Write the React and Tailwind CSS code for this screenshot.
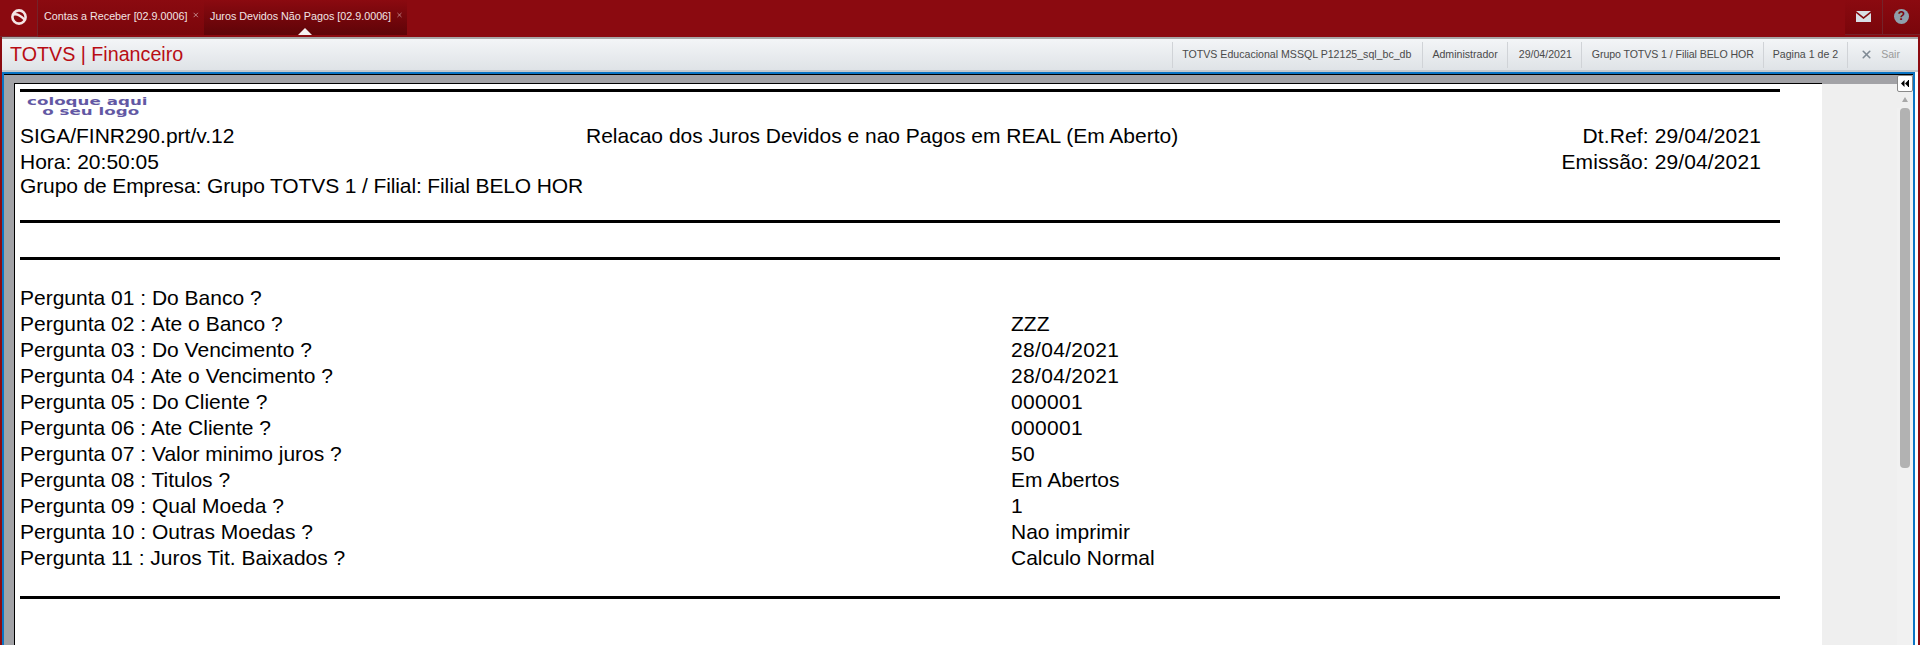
import React from 'react'
import { X } from 'lucide-react'

const tabs = [
    { label: 'Contas a Receber [02.9.0006]', active: false },
    { label: 'Juros Devidos Não Pagos [02.9.0006]', active: true },
]

const infos = [
    { label: 'TOTVS Educacional MSSQL P12125_sql_bc_db', className: 'pl-[9px] pr-[11px]' },
    { label: 'Administrador', className: 'px-[9px]' },
    { label: '29/04/2021', className: 'pl-[11px] pr-[9px]' },
    { label: 'Grupo TOTVS 1 / Filial BELO HOR', className: 'pl-[10px] pr-[9px] tracking-[-0.08px]' },
    { label: 'Pagina 1 de 2', className: 'px-[9px]' },
]

const perguntas = [
    ['Pergunta 01 : Do Banco ?', ''],
    ['Pergunta 02 : Ate o Banco ?', 'ZZZ'],
    ['Pergunta 03 : Do Vencimento ?', '28/04/2021'],
    ['Pergunta 04 : Ate o Vencimento ?', '28/04/2021'],
    ['Pergunta 05 : Do Cliente ?', '000001'],
    ['Pergunta 06 : Ate Cliente ?', '000001'],
    ['Pergunta 07 : Valor minimo juros ?', '50'],
    ['Pergunta 08 : Titulos ?', 'Em Abertos'],
    ['Pergunta 09 : Qual Moeda ?', '1'],
    ['Pergunta 10 : Outras Moedas ?', 'Nao imprimir'],
    ['Pergunta 11 : Juros Tit. Baixados ?', 'Calculo Normal'],
]

const Rule = ({ className }) => <div className={`h-[3px] w-[1760px] bg-black ${className}`} />

const TotvsLogo = () => (
    <svg width="18" height="18" viewBox="0 0 18 18" fill="none">
        <circle cx="9" cy="9" r="6.6" stroke="#f4e6e6" strokeWidth="2.6" />
        <path d="M3.5 6.5 C7 5.5 11 8 14.5 11.5" stroke="#f4e6e6" strokeWidth="2.4" />
    </svg>
)

const EnvelopeIcon = () => (
    <svg width="15" height="11" viewBox="0 0 15 11">
        <path d="M0 0 H15 L7.5 6 Z" fill="#d8dfe6" />
        <path d="M0 2 L7.5 8 L15 2 V11 H0 Z" fill="#d8dfe6" />
    </svg>
)

const CollapseIcon = () => (
    <svg width="8" height="7" viewBox="0 0 8 7">
        <path d="M0 3.5 L3.5 0 V7 Z" fill="#000" />
        <path d="M4 3.5 L7 0.5 V6.5 Z" fill="#000" />
        <rect x="7" y="0" width="1" height="7" fill="#000" />
    </svg>
)

export default function App() {
    return (
        <div className="flex h-[645px] w-[1920px] flex-col overflow-hidden bg-[#8b0a10] font-['Liberation_Sans',Arial,sans-serif]">
            {/* Top bar */}
            <header className="flex h-[37px] shrink-0 items-stretch">
                <div className="flex w-[38px] items-center justify-center border-r border-b border-[#75232a] bg-[#8b0a10] pb-[2px]">
                    <TotvsLogo />
                </div>
                <div className="flex h-[35px] items-stretch">
                    {tabs.map((tab) => (
                        <div
                            key={tab.label}
                            className={`relative flex items-center pl-[6px] pr-[4px] text-[10.75px] text-[#f3e4e4] ${tab.active ? 'w-[203px] bg-gradient-to-b from-[#8b0a10] to-[#5f0408]' : 'w-[166px] bg-gradient-to-b from-[#8b0a10] to-[#7a060b]'}`}
                        >
                            <span className="pb-[3px] whitespace-nowrap">{tab.label}</span>
                            <X size={8} strokeWidth={2.5} className="mb-[5px] ml-[5px] text-[#cfa4a6]" />
                            {tab.active && (
                                <div className="absolute bottom-0 left-[94px] h-0 w-0 border-x-[7px] border-b-[7px] border-x-transparent border-b-[#f5f0f0]" />
                            )}
                        </div>
                    ))}
                </div>
                <div className="ml-auto flex h-[35px] items-stretch">
                    <div className="flex w-[38px] items-center justify-center border-r border-b border-[#75232a] bg-gradient-to-b from-[#8b0a10] to-[#7a060b] pb-[2px]">
                        <EnvelopeIcon />
                    </div>
                    <div className="flex w-[37px] items-center justify-center border-b border-[#75232a] bg-gradient-to-b from-[#8b0a10] to-[#7a060b] pb-[2px]">
                        <div className="flex h-[15px] w-[15px] items-center justify-center rounded-full bg-[#8fa0ac] text-[12px] font-bold text-[#7a060b]">?</div>
                    </div>
                </div>
            </header>

            <div className="mx-[2px] flex min-h-0 flex-1 flex-col bg-white">
                {/* Sub header */}
                <div className="flex h-[35px] shrink-0 items-center border-t-[2px] border-b-[2px] border-t-[#a9a9a9] border-b-[#c4c8cc] bg-gradient-to-b from-[#f3f5f7] to-[#dfe3e7] pr-[18px]">
                    <span className="pl-[8px] text-[19.7px] text-[#b80d14]">TOTVS | Financeiro</span>
                    <div className="ml-auto flex h-[26px] items-stretch text-[10.6px] text-[#4a4a4a]">
                        {infos.map((info) => (
                            <div key={info.label} className={`flex items-center border-l border-[#d0d3d7] whitespace-nowrap ${info.className}`}>
                                {info.label}
                            </div>
                        ))}
                        <div className="flex items-center gap-[8px] border-l border-[#d0d3d7] pl-[12px] text-[#9a9a9a]">
                            <X size={13} strokeWidth={3} className="text-[#7f8a94]" />
                            <span>Sair</span>
                        </div>
                    </div>
                </div>

                {/* Report frame */}
                <div className="mr-[3px] flex min-h-0 flex-1 border-t-[2px] border-l-[2px] border-r-[2px] border-[#0a74c4]">
                    <div className="flex min-h-0 flex-1 border-t border-black bg-[#a2a2a6] pl-[10px]">
                        <div className="mt-[8px] w-[1808px] shrink-0 border-t border-l border-black bg-white pt-[5px] pl-[5px] text-[21px] leading-[26px] text-black">
                            <Rule />
                            <div className="mt-[5px] ml-[7px] h-[20px] w-[78px] origin-left scale-x-[1.52] font-['DejaVu_Sans',sans-serif] text-[11px] leading-[10px] font-bold whitespace-nowrap text-[#2f1f86] opacity-75">
                                <div>coloque aqui</div>
                                <div className="pl-[10px]">o seu logo</div>
                            </div>
                            <div className="mt-[6px] grid w-[1741px] grid-cols-[566px_1fr_auto]">
                                <div>SIGA/FINR290.prt/v.12</div>
                                <div>Relacao dos Juros Devidos e nao Pagos em REAL (Em Aberto)</div>
                                <div className="text-right tracking-[0.12px]">Dt.Ref: 29/04/2021</div>
                                <div>Hora: 20:50:05</div>
                                <div />
                                <div className="text-right tracking-[0.12px]">Emissão: 29/04/2021</div>
                                <div className="col-span-3 -mt-[2px] tracking-[-0.12px]">Grupo de Empresa: Grupo TOTVS 1 / Filial: Filial BELO HOR</div>
                            </div>
                            <Rule className="mt-[21px]" />
                            <Rule className="mt-[34px]" />
                            <div className="mt-[25px] grid grid-cols-[991px_1fr]">
                                {perguntas.map(([pergunta, valor]) => (
                                    <React.Fragment key={pergunta}>
                                        <div>{pergunta}</div>
                                        <div className={/^[\d/]+$/.test(valor) ? 'tracking-[0.32px]' : ''}>{valor}</div>
                                    </React.Fragment>
                                ))}
                            </div>
                            <Rule className="mt-[25px]" />
                        </div>
                        {/* Side panel with scrollbar */}
                        <div className="relative mt-[9px] flex-1 bg-[#efefef]">
                            <div className="absolute top-[24px] right-0 bottom-0 w-[16px] bg-[#f1f1f1]" />
                            <div className="absolute top-[-9px] right-0 flex h-[17px] w-[16px] items-center justify-center rounded-[2px] border border-[#8a8a8a] bg-white">
                                <CollapseIcon />
                            </div>
                            <div className="absolute top-[13px] right-[5px] h-0 w-0 border-x-[3px] border-b-[5px] border-x-transparent border-b-[#a8a8a8]" />
                            <div className="absolute top-[24px] right-[3px] h-[360px] w-[10px] rounded-[4px] bg-[#b2b2b2]" />
                        </div>
                    </div>
                </div>
            </div>
        </div>
    )
}
